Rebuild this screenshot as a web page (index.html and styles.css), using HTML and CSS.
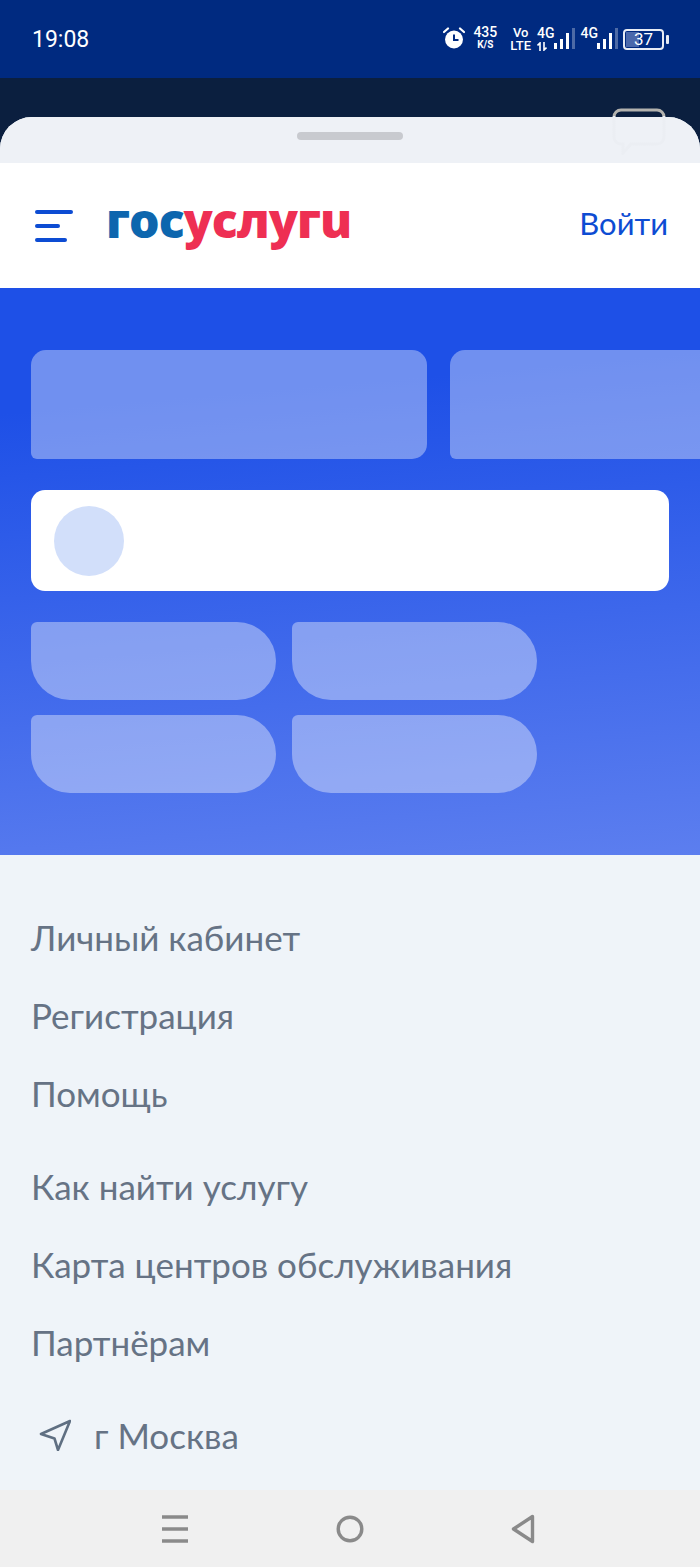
FILE: index.html
```html
<!DOCTYPE html>
<html lang="ru">
<head>
    <meta charset="UTF-8">
    <meta name="viewport" content="width=device-width, initial-scale=1.0">
    <title>Госуслуги</title>
    <link rel="stylesheet" href="styles.css">
</head>
<body>

<div class="screen">
    <!-- Status bar -->
    <div class="status-bar">
        <span class="time">19:08</span>
        <div class="status-icons">
            <svg class="alarm" width="22" height="22" viewBox="0 0 22 22">
                <circle cx="11" cy="12.500" r="9" fill="#fff"/>
                <path d="M1 5l4-3.500M21 5l-4-3.500" stroke="#fff" stroke-width="2.200" stroke-linecap="round"/>
                <path d="M11 7.500v5.500h4.500" fill="none" stroke="#002a80" stroke-width="2"/>
            </svg>
            <div class="stack speed"><span>435</span><small>K/S</small></div>
            <div class="stack volte"><span>Vo</span><span>LTE</span></div>
            <div class="signal signal-first">
                <div class="stack net">
                    <span>4G</span>
                    <svg class="arrows" width="10" height="9" viewBox="0 0 10 9">
                        <path d="M3 9V1L0.500 3.500M7 0v8l2.500-2.500" fill="none" stroke="#fff" stroke-width="1.600"/>
                    </svg>
                </div>
                <svg width="21" height="22" viewBox="0 0 21 22">
                    <rect x="0" y="15" width="3" height="6" fill="#fff"/>
                    <rect x="6" y="11" width="3" height="10" fill="#fff"/>
                    <rect x="12" y="5" width="3" height="16" fill="#fff"/>
                    <rect x="18" y="0" width="3" height="21" fill="#fff" opacity=".3"/>
                </svg>
            </div>
            <div class="signal">
                <div class="stack net"><span>4G</span><small>&nbsp;</small></div>
                <svg width="21" height="22" viewBox="0 0 21 22">
                    <rect x="0" y="15" width="3" height="6" fill="#fff"/>
                    <rect x="6" y="11" width="3" height="10" fill="#fff"/>
                    <rect x="12" y="5" width="3" height="16" fill="#fff"/>
                    <rect x="18" y="0" width="3" height="21" fill="#fff" opacity=".3"/>
                </svg>
            </div>
            <div class="battery">
                <div class="battery-body"><div class="battery-level"></div><span>37</span></div>
                <div class="battery-nub"></div>
            </div>
        </div>
    </div>

    <!-- Bottom sheet -->
    <div class="sheet">
        <div class="grabber"><div class="grabber-bar"></div></div>

        <header class="top-bar">
            <div class="burger"><i class="b1"></i><i class="b2"></i><i class="b3"></i></div>
            <div class="logo"><span class="logo-blue">гос</span><span class="logo-red">услугu</span></div>
            <a class="login">Войти</a>
        </header>

        <section class="hero">
            <div class="banners">
                <div class="banner"></div>
                <div class="banner"></div>
            </div>
            <div class="search-card"><div class="search-dot"></div></div>
            <div class="pills">
                <div class="pill"></div>
                <div class="pill"></div>
                <div class="pill"></div>
                <div class="pill"></div>
            </div>
        </section>

        <nav class="menu">
            <div class="menu-group">
                <a>Личный кабинет</a>
                <a>Регистрация</a>
                <a>Помощь</a>
            </div>
            <div class="menu-group">
                <a>Как найти услугу</a>
                <a>Карта центров обслуживания</a>
                <a>Партнёрам</a>
            </div>
            <div class="location">
                <svg width="32" height="32" viewBox="0 0 32 32">
                    <path d="M31 2L2 15l13.500 4.500L19 31z" fill="none" stroke="#5f6f82" stroke-width="2.600" stroke-linejoin="round"/>
                </svg>
                <span>г Москва</span>
            </div>
        </nav>
    </div>

    <!-- Android navigation -->
    <div class="nav-bar">
        <svg width="26" height="28" viewBox="0 0 26 28">
            <path d="M0 2h26M0 14h26M0 26h26" stroke="#8a8a8a" stroke-width="3.600"/>
        </svg>
        <svg width="28" height="28" viewBox="0 0 28 28">
            <circle cx="14" cy="14" r="11.800" fill="none" stroke="#8a8a8a" stroke-width="3.400"/>
        </svg>
        <svg width="24" height="30" viewBox="0 0 24 30">
            <path d="M21.500 2.500L2.500 15l19 12.500z" fill="none" stroke="#8a8a8a" stroke-width="3.400" stroke-linejoin="round"/>
        </svg>
    </div>

    <!-- Chat bubble floating over the sheet edge -->
    <svg class="bubble" width="56" height="48" viewBox="0 0 56 48">
        <defs>
            <linearGradient id="bubbleStroke" gradientUnits="userSpaceOnUse" x1="0" y1="0" x2="0" y2="48">
                <stop offset="0.19" stop-color="#b3b2ae"/>
                <stop offset="0.19" stop-color="#ebeef3"/>
            </linearGradient>
        </defs>
        <path d="M10 3h36a7 7 0 0 1 7 7v20a7 7 0 0 1-7 7H20l-8 9v-9h-2a7 7 0 0 1-7-7V10a7 7 0 0 1 7-7z" fill="none" stroke="url(#bubbleStroke)" stroke-width="3"/>
    </svg>
</div>

</body>
</html>
```

FILE: styles.css
```css
/* Base */
body {
    margin: 0;
    background-color: #0b1f3f;
    font-family: "Lato", sans-serif;
}

.screen {
    width: 700px;
    height: 1567px;
    display: flex;
    flex-direction: column;
    position: relative;
    overflow: hidden;
}

/* Status bar */
.status-bar {
    height: 78px;
    flex-shrink: 0;
    background-color: #002a80;
    color: #fff;
    display: flex;
    justify-content: space-between;
    align-items: center;
    padding: 0 31px 0 32px;
    box-sizing: border-box;
    font-family: "Roboto", sans-serif;
}

.time {
    font-size: 23px;
}

.status-icons {
    display: flex;
    align-items: center;
}

.alarm {
    margin-right: 8px;
    margin-top: -2px;
}

.stack {
    display: flex;
    flex-direction: column;
    align-items: center;
    font-size: 14px;
    font-weight: 500;
    line-height: 13px;
}

.stack small {
    font-size: 10px;
    line-height: 11px;
    font-weight: 700;
}

.speed {
    margin-right: 13px;
    margin-top: -2px;
}

.volte {
    margin-right: 6px;
    font-size: 13px;
}

.signal {
    display: flex;
    align-items: center;
    margin-right: 5px;
}

.signal-first {
    margin-right: 6px;
}

.net {
    font-size: 14px;
    align-items: flex-start;
    margin-right: -1px;
}

.arrows {
    margin-top: 2px;
}

.battery {
    display: flex;
    align-items: center;
    gap: 2px;
}

.battery-body {
    width: 41px;
    height: 21px;
    box-sizing: border-box;
    border: 2px solid #e8ecf5;
    border-radius: 4px;
    position: relative;
    display: flex;
    align-items: center;
    justify-content: center;
    font-size: 17px;
}

.battery-level {
    position: absolute;
    left: 1px;
    top: 1px;
    bottom: 1px;
    width: 13px;
    background-color: #4a68ab;
}

.battery-body span {
    position: relative;
}

.battery-nub {
    width: 3px;
    height: 9px;
    background-color: #e8ecf5;
    border-radius: 1px;
}

/* Sheet */
.sheet {
    margin-top: 39px;
    flex: 1;
    min-height: 0;
    display: flex;
    flex-direction: column;
    border-radius: 32px 32px 0 0;
    overflow: hidden;
    background-color: #eff4f9;
}

.grabber {
    height: 46px;
    flex-shrink: 0;
    background-color: #eef1f6;
    display: flex;
    justify-content: center;
    padding-top: 15px;
    box-sizing: border-box;
}

.grabber-bar {
    width: 106px;
    height: 8px;
    border-radius: 4px;
    background-color: #c8cacf;
}

.top-bar {
    height: 125px;
    flex-shrink: 0;
    background-color: #fff;
    display: flex;
    align-items: center;
    padding: 0 32px 0 35px;
}

.burger {
    display: flex;
    flex-direction: column;
    gap: 10px;
    width: 38px;
    margin-right: 33px;
}

.burger i {
    display: block;
    height: 4px;
    border-radius: 2px;
    background-color: #0d4cd3;
}

.b1 { width: 38px; }
.b2 { width: 25px; }
.b3 { width: 32px; }

.logo {
    font-family: "Open Sans", sans-serif;
    font-size: 48px;
    font-weight: 800;
    line-height: 50px;
    letter-spacing: -1px;
    flex: 1;
    margin-bottom: 12px;
}

.logo-blue { color: #0d66ae; }
.logo-red { color: #ee2f53; }

.login {
    font-size: 31px;
    color: #0d4cd3;
    margin-bottom: 6px;
}

/* Hero */
.hero {
    height: 567px;
    flex-shrink: 0;
    box-sizing: border-box;
    padding: 62px 31px 0;
    background: linear-gradient(175deg, #1e50e7 20%, #5c7eef 100%);
}

.banners {
    display: flex;
    gap: 23px;
    margin-right: -31px;
    overflow: hidden;
}

.banner {
    flex: 0 0 396px;
    height: 109px;
    border-radius: 15px 15px 15px 6px;
    background-color: rgba(255, 255, 255, 0.37);
}

.search-card {
    margin-top: 31px;
    height: 101px;
    box-sizing: border-box;
    padding: 16px 23px;
    background-color: #fff;
    border-radius: 14px;
}

.search-dot {
    width: 70px;
    height: 70px;
    border-radius: 50%;
    background-color: #d2dffa;
}

.pills {
    margin-top: 31px;
    display: grid;
    grid-template-columns: 245px 245px;
    gap: 15px 16px;
}

.pill {
    height: 78px;
    border-radius: 6px 39px 39px 39px;
    background-color: rgba(255, 255, 255, 0.38);
}

/* Footer menu */
.menu {
    flex: 1;
    padding: 43px 31px 0;
    font-size: 35px;
    color: #667385;
}

.menu-group {
    margin-bottom: 15px;
}

.menu a {
    display: block;
    height: 78px;
    line-height: 78px;
}

.location {
    display: flex;
    align-items: center;
    height: 78px;
    gap: 23px;
    padding-left: 8px;
}

/* Navigation bar */
.nav-bar {
    height: 77px;
    flex-shrink: 0;
    background-color: #f0f0f0;
    display: flex;
    justify-content: space-between;
    align-items: center;
    padding: 0 165px 0 162px;
}

.bubble {
    position: absolute;
    left: 611px;
    top: 107px;
}
```
